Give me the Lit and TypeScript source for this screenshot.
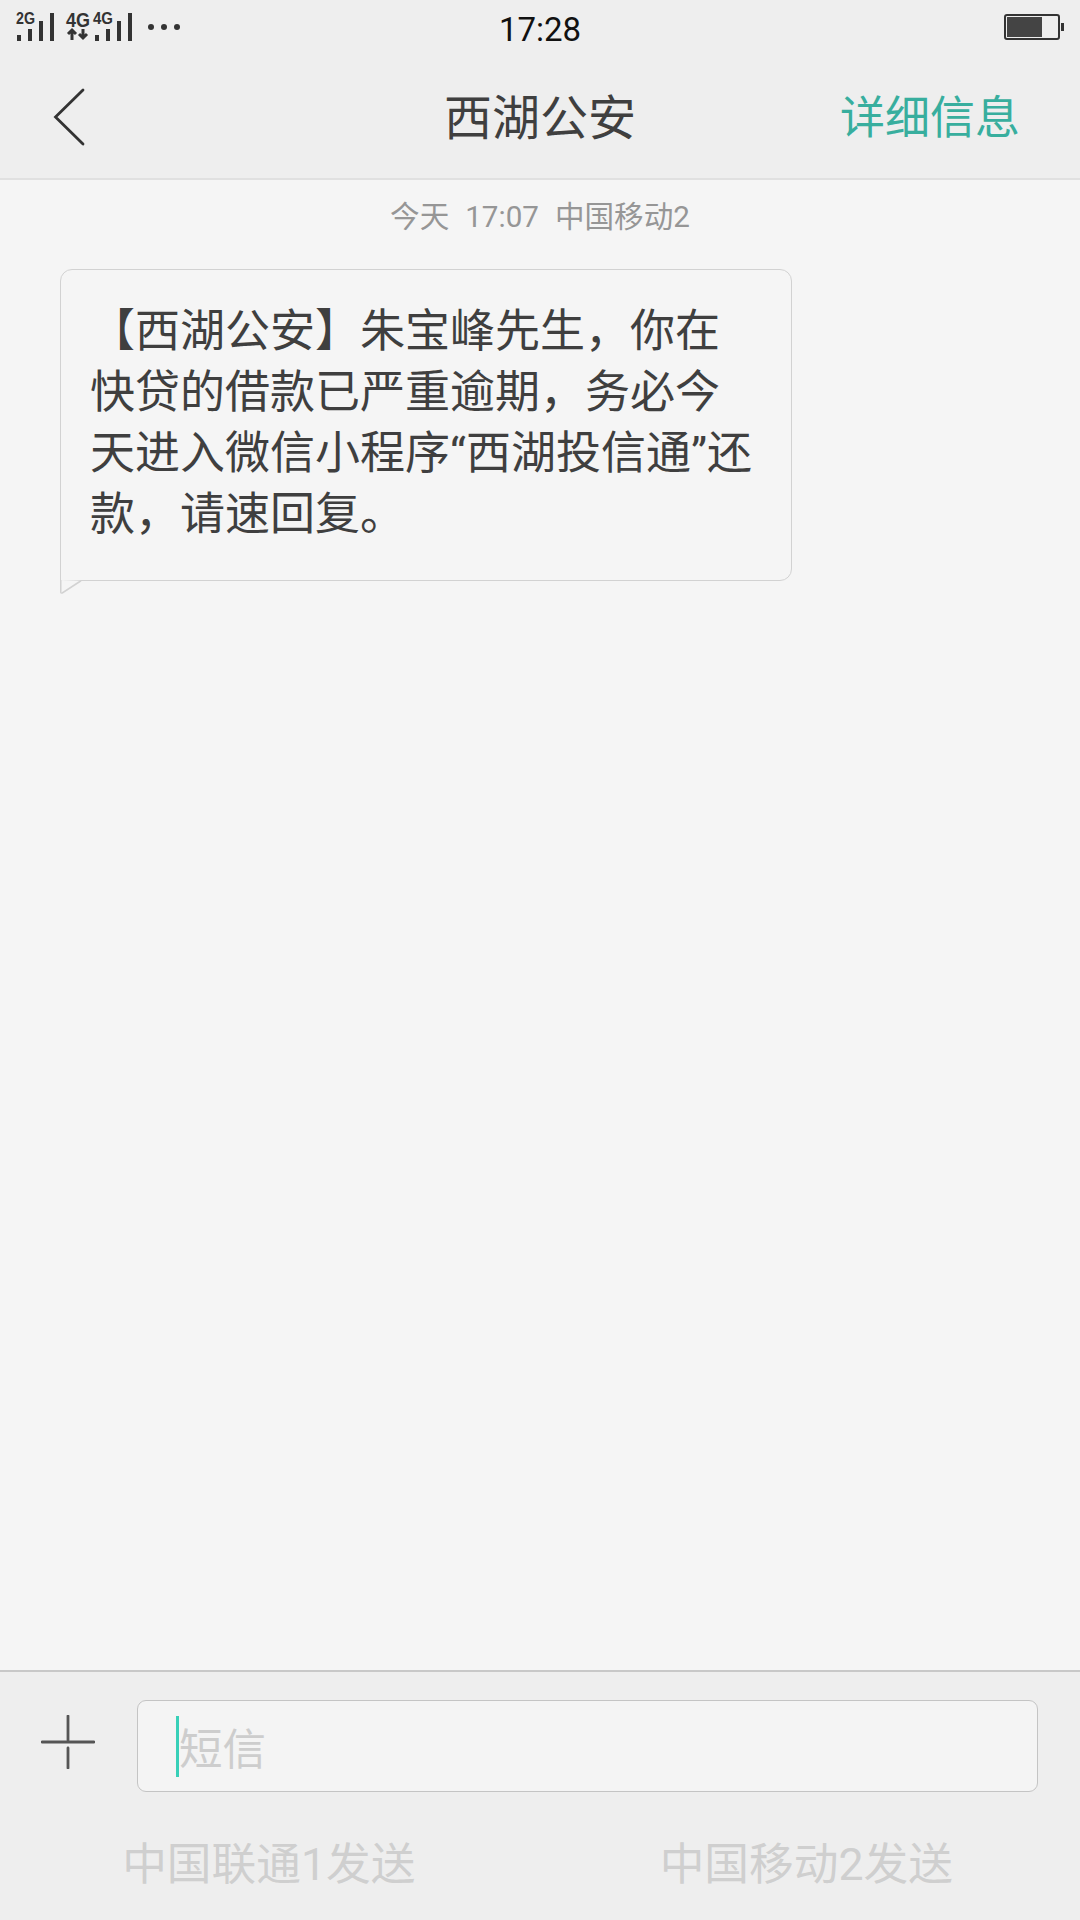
import { LitElement, html, css, svg } from 'lit';
import { customElement } from 'lit/decorators.js';

// signal bars, drawn at the bottom right of each sim block
const bars = (x: number) => [0, 11, 22, 33].map((dx, i) => {
  const h = [6, 12, 20, 28][i];
  return svg`<rect x=${x + dx} y=${41 - h} width="4" height=${h} fill="#333"></rect>`;
});

@customElement('app-root')
export class AppRoot extends LitElement {
  static styles = css`
    :host {
      display: flex;
      flex-direction: column;
      width: 1080px;
      height: 1920px;
      background: #f5f5f5;
      font-family: Roboto, 'Noto Sans CJK SC', sans-serif;
      color: #3f3f3f;
    }
    .top {
      background: #eeeeee;
      border-bottom: 2px solid #e0e0e0;
      height: 178px;
      flex: none;
    }
    .status {
      display: grid;
      grid-template-columns: 1fr auto 1fr;
      align-items: start;
      height: 60px;
    }
    .status svg { display: block; }
    .clock {
      font-size: 33px;
      color: #111;
      line-height: 56px;
      padding-top: 2px;
    }
    .battery { justify-self: end; margin: 13px 16px 0 0; }
    .nav {
      display: grid;
      grid-template-columns: 1fr auto 1fr;
      align-items: center;
      height: 118px;
    }
    .back { margin: 0 0 4px 52px; display: block; }
    .title { font-size: 48px; line-height: 118px; }
    .detail {
      justify-self: end;
      margin-right: 60px;
      font-size: 45px;
      line-height: 118px;
      color: #38ae9e;
    }
    .thread {
      flex: 1;
      padding: 17px 60px 0;
    }
    .stamp {
      text-align: center;
      font-size: 29.6px;
      line-height: 40px;
      color: #969696;
    }
    .stamp span { margin: 0 8px; }
    .bubble {
      position: relative;
      box-sizing: border-box;
      width: 732px;
      margin-top: 32px;
      padding: 31px 20px 35px 29px;
      border: 1.5px solid #d2d2d2;
      border-radius: 12px 12px 12px 0;
      font-size: 45px;
      line-height: 61px;
    }
    .tail {
      position: absolute;
      left: -1.5px;
      bottom: -14px;
      display: block;
    }
    .bottom {
      flex: none;
      height: 250px;
      box-sizing: border-box;
      background: #eeeeee;
      border-top: 2px solid #c8c8c8;
      padding-top: 28px;
    }
    .compose {
      display: flex;
      align-items: flex-start;
      padding: 0 42px 0 41px;
      gap: 42px;
    }
    .plus { display: block; flex: none; margin-top: 15px; }
    .field {
      flex: 1;
      box-sizing: border-box;
      height: 92px;
      display: flex;
      align-items: center;
      padding-left: 38px;
      background: #f4f4f4;
      border: 1.5px solid #c4c4c4;
      border-radius: 9px;
      font-size: 43.5px;
      color: #cdcdcd;
    }
    .caret {
      width: 3px;
      height: 61px;
      background: #38d0b8;
      flex: none;
    }
    .send {
      display: grid;
      grid-template-columns: 1fr 1fr;
      margin-top: 43px;
      padding-right: 5px;
      text-align: center;
      font-size: 44.7px;
      line-height: 60px;
      color: #cfcfcf;
    }
  `;

  render() {
    return html`
      <div class="top">
        <div class="status">
          <svg width="200" height="50" viewBox="0 0 200 50">
            <text x="16" y="24" font-family="Liberation Sans" font-weight="700" font-size="16" textLength="19" lengthAdjust="spacingAndGlyphs" fill="#333">2G</text>
            ${bars(17)}
            <text x="66" y="27" font-family="Liberation Sans" font-weight="700" font-size="20" textLength="24" lengthAdjust="spacingAndGlyphs" fill="#333">4G</text>
            <path d="M72 40v-8M68 34l4-4 4 4M83 29v8M79 34l4 4 4-4" stroke="#333" stroke-width="3" fill="none"></path>
            <text x="93" y="24" font-family="Liberation Sans" font-weight="700" font-size="16" textLength="20" lengthAdjust="spacingAndGlyphs" fill="#333">4G</text>
            ${bars(95)}
            <circle cx="151" cy="27" r="3" fill="#333"></circle>
            <circle cx="164" cy="27" r="3" fill="#333"></circle>
            <circle cx="177" cy="27" r="3" fill="#333"></circle>
          </svg>
          <div class="clock">17:28</div>
          <svg class="battery" width="60" height="30" viewBox="0 0 60 30">
            <rect x="1" y="2" width="54" height="24" rx="2" fill="none" stroke="#333" stroke-width="2"></rect>
            <rect x="3" y="4" width="35" height="20" fill="#444"></rect>
            <rect x="57" y="10" width="3" height="8" fill="#333"></rect>
          </svg>
        </div>
        <div class="nav">
          <svg class="back" width="34" height="58" viewBox="0 0 34 58">
            <path d="M31 2 3.5 29 31 56" fill="none" stroke="#333" stroke-width="2.8" stroke-linecap="round"></path>
          </svg>
          <div class="title">西湖公安</div>
          <div class="detail">详细信息</div>
        </div>
      </div>
      <div class="thread">
        <div class="stamp">今天<span></span>17:07<span></span>中国移动2</div>
        <div class="bubble">
          【西湖公安】朱宝峰先生，你在<br />快贷的借款已严重逾期，务必今<br />天进入微信小程序“西湖投信通”还<br />款，请速回复。
          <svg class="tail" width="22" height="14" viewBox="0 0 22 14">
            <path d="M.75 0v12q0 1.5 1.5 1L21 .75" fill="#f5f5f5" stroke="#d2d2d2" stroke-width="1.5"></path>
          </svg>
        </div>
      </div>
      <div class="bottom">
        <div class="compose">
          <svg class="plus" width="54" height="54" viewBox="0 0 54 54">
            <path d="M1 27h52M27 1v24M27 33v20" stroke="#555" stroke-width="2.8" stroke-linecap="round" fill="none"></path>
          </svg>
          <div class="field"><span class="caret"></span>短信</div>
        </div>
        <div class="send">
          <div>中国联通1发送</div>
          <div>中国移动2发送</div>
        </div>
      </div>
    `;
  }
}
